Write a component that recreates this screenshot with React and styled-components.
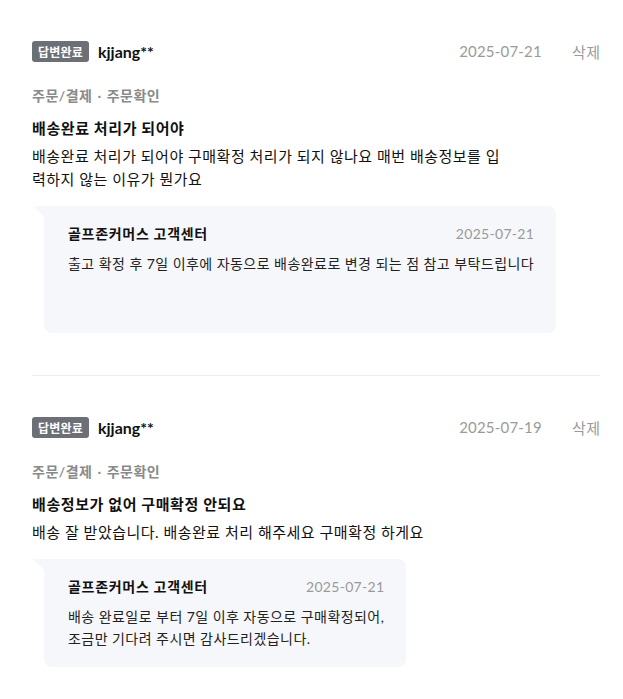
import React from 'react';
import styled, { createGlobalStyle } from 'styled-components';

const GlobalStyle = createGlobalStyle`
  body {
    margin: 0;
    background: #fff;
    font-family: Lato, "Noto Sans CJK KR", sans-serif;
    color: #111;
  }
`;

const List = styled.ul`
  list-style: none;
  margin: 0;
  padding: 0 23px 0 32px;
`;

const Item = styled.li`
  padding: 40px 0 42px;
  border-bottom: 1px solid #ececec;

  &:last-child {
    border-bottom: none;
  }
`;

const TopRow = styled.div`
  display: flex;
  align-items: center;
  height: 22px;
`;

const Badge = styled.span`
  display: inline-flex;
  align-items: center;
  justify-content: center;
  height: 21px;
  padding: 0 6px;
  border-radius: 3px;
  background: #6d6f76;
  color: #fff;
  font-size: 12px;
  font-weight: 700;
  letter-spacing: 0.2px;
`;

const User = styled.span`
  margin-left: 9px;
  font-size: 16px;
  font-weight: 700;
  color: #111;
`;

const Meta = styled.div`
  margin-left: auto;
  display: flex;
  align-items: center;
  gap: 30px;
  font-size: 15px;
  color: #9a9a9a;
`;

const DateText = styled.span`
  letter-spacing: 0.2px;
`;

const DeleteButton = styled.button`
  border: none;
  background: none;
  padding: 0;
  font: inherit;
  color: #9a9a9a;
  letter-spacing: 0.5px;
  margin-right: -0.5px;
  cursor: pointer;
`;

const Category = styled.div`
  margin-top: 24px;
  font-size: 14px;
  line-height: 20px;
  font-weight: 600;
  color: #8a8a8a;
  letter-spacing: 0.5px;
`;

const Dot = styled.span`
  padding: 0 5px;
`;

const Title = styled.div`
  margin-top: 11px;
  font-size: 15px;
  line-height: 22px;
  font-weight: 700;
  color: #111;
  letter-spacing: 0.6px;
`;

const Body = styled.p`
  margin: 6px 0 0;
  max-width: 470px;
  font-size: 15px;
  line-height: 23px;
  color: #111;
  letter-spacing: 0.5px;
  word-break: break-all;
`;

const Reply = styled.div`
  position: relative;
  width: fit-content;
  box-sizing: border-box;
  min-height: ${({ $minHeight }) => $minHeight || 0}px;
  margin: 15px 0 0 12px;
  padding: 18px 22px 17px 24px;
  background: #f6f7fa;
  border-radius: 0 8px 8px 8px;

  &::before {
    content: '';
    position: absolute;
    top: 0;
    left: -11px;
    border-top: 11px solid #f6f7fa;
    border-left: 11px solid transparent;
  }
`;

const ReplyHead = styled.div`
  display: flex;
  align-items: center;
  justify-content: space-between;
  gap: 40px;
  line-height: 20px;
`;

const ReplyName = styled.span`
  font-size: 14px;
  font-weight: 700;
  color: #111;
  letter-spacing: 0.7px;
`;

const ReplyDate = styled.span`
  font-size: 14px;
  color: #9a9a9a;
  letter-spacing: 0.3px;
`;

const ReplyText = styled.p`
  margin: 9px 0 0;
  font-size: 14px;
  line-height: 22px;
  color: #222;
  letter-spacing: 0.45px;
  white-space: pre-line;
`;

const reviews = [
  {
    id: 1,
    user: 'kjjang**',
    date: '2025-07-21',
    category: ['주문/결제', '주문확인'],
    title: '배송완료 처리가 되어야',
    body: '배송완료 처리가 되어야 구매확정 처리가 되지 않나요 매번 배송정보를 입력하지 않는 이유가 뭔가요',
    reply: {
      name: '골프존커머스 고객센터',
      date: '2025-07-21',
      text: '출고 확정 후 7일 이후에 자동으로 배송완료로 변경 되는 점 참고 부탁드립니다',
      minHeight: 127,
    },
  },
  {
    id: 2,
    user: 'kjjang**',
    date: '2025-07-19',
    category: ['주문/결제', '주문확인'],
    title: '배송정보가 없어 구매확정 안되요',
    body: '배송 잘 받았습니다. 배송완료 처리 해주세요 구매확정 하게요',
    reply: {
      name: '골프존커머스 고객센터',
      date: '2025-07-21',
      text: '배송 완료일로 부터 7일 이후 자동으로 구매확정되어,\n조금만 기다려 주시면 감사드리겠습니다.',
    },
  },
];

export default function App() {
  return (
    <>
      <GlobalStyle />
      <List>
        {reviews.map((item) => (
          <Item key={item.id}>
            <TopRow>
              <Badge>답변완료</Badge>
              <User>{item.user}</User>
              <Meta>
                <DateText>{item.date}</DateText>
                <DeleteButton>삭제</DeleteButton>
              </Meta>
            </TopRow>
            <Category>
              {item.category[0]}
              <Dot>·</Dot>
              {item.category[1]}
            </Category>
            <Title>{item.title}</Title>
            <Body>{item.body}</Body>
            <Reply $minHeight={item.reply.minHeight}>
              <ReplyHead>
                <ReplyName>{item.reply.name}</ReplyName>
                <ReplyDate>{item.reply.date}</ReplyDate>
              </ReplyHead>
              <ReplyText>{item.reply.text}</ReplyText>
            </Reply>
          </Item>
        ))}
      </List>
    </>
  );
}
